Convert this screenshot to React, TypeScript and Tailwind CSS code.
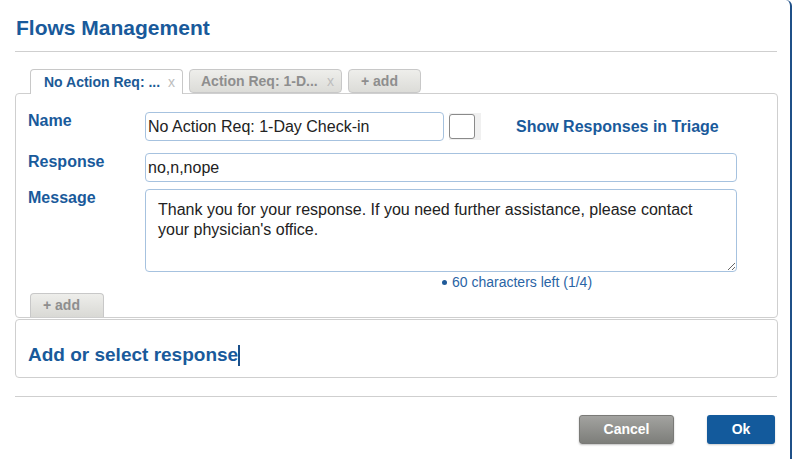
import { useState } from 'react';

export default function App() {
  const [name, setName] = useState('No Action Req: 1-Day Check-in');
  const [response, setResponse] = useState('no,n,nope');
  const [message, setMessage] = useState(
    "Thank you for your response. If you need further assistance, please contact your physician's office."
  );

  return (
    <div className="w-[796px] h-[459px] bg-white flex font-['Liberation_Sans',Arial,sans-serif]">
      <div className="w-[792px] h-full border-r-2 border-[#1f5088] rounded-tr-[6px] pl-[15px] pr-[12px]">
        <h1 className="pl-[1px] pt-[16px] text-[21px] leading-[24px] font-bold text-[#195a9b]">Flows Management</h1>
        <div className="mt-[11px] mr-px border-t border-[#cfcfcf]" />

        {/* tabs */}
        <div className="mt-[17px] -mb-px flex gap-[6px] pl-[15px] relative z-10">
          <div className="w-[153px] h-[25px] flex items-center justify-between pl-[13px] pr-[7px] bg-white border border-b-0 border-[#c8c8c8] rounded-t-[4px] text-[14px] font-bold text-[#1c5a96]">
            <span>No Action Req: ...</span>
            <span className="font-normal text-[#bdbdbd]">x</span>
          </div>
          <div className="w-[153px] h-[24px] flex items-center justify-between pl-[11px] pr-[7px] bg-gradient-to-b from-[#eeeeeb] to-[#dcdcd8] border border-[#c8c8c8] rounded-[4px] text-[14px] font-bold text-[#8e8e8e]">
            <span>Action Req: 1-D...</span>
            <span className="font-normal text-[#bdbdbd]">x</span>
          </div>
          <div className="w-[73px] h-[24px] flex items-center pl-[12px] bg-gradient-to-b from-[#eeeeeb] to-[#dcdcd8] border border-[#c8c8c8] rounded-[4px] text-[14px] font-bold text-[#8e8e8e]">
            + add
          </div>
        </div>

        {/* response panel */}
        <div className="border border-[#cfcfcf] rounded-[4px] bg-white pt-[18px] pl-[12px] pr-[40px]">
          <div className="grid grid-cols-[117px_1fr]">
            <label className="text-[16px] leading-[18px] font-bold text-[#195a9b]">Name</label>
            <div className="flex items-center">
              <input
                value={name}
                onChange={(e) => setName(e.target.value)}
                className="w-[299px] h-[29px] px-[2px] border border-[#a6c2df] rounded-[4px] text-[16px] text-[#222] outline-none"
              />
              <div className="ml-[5px] w-[32px] h-[27px] bg-[#f0f0f0] flex items-center">
                <div className="w-[26px] h-[25px] border border-[#8a8a8a] rounded-[3px] bg-white" />
              </div>
              <span className="ml-[35px] text-[16px] font-bold text-[#195a9b]">Show Responses in Triage</span>
            </div>

            <label className="mt-[12px] text-[16px] leading-[18px] font-bold text-[#195a9b]">Response</label>
            <input
              value={response}
              onChange={(e) => setResponse(e.target.value)}
              className="mt-[12px] w-full h-[29px] px-[2px] border border-[#a6c2df] rounded-[4px] text-[16px] text-[#222] outline-none"
            />

            <label className="mt-[7px] text-[16px] leading-[18px] font-bold text-[#195a9b]">Message</label>
            <textarea
              value={message}
              onChange={(e) => setMessage(e.target.value)}
              className="mt-[7px] w-full h-[83px] pt-[10px] px-[12px] border border-[#a6c2df] rounded-[4px] text-[16px] leading-[20px] text-[#222] outline-none"
            />

            <div />
            <div className="mt-[2px] pl-[297px] flex items-center gap-[5px] text-[14px] leading-[16px] text-[#2a64a5]">
              <span className="w-[5px] h-[5px] rounded-full bg-[#1f5a99]" />
              <span>60 characters left (1/4)</span>
            </div>
          </div>

          <button className="mt-[3px] ml-[2px] w-[74px] h-[24px] flex items-center pl-[12px] bg-gradient-to-b from-[#eeeeeb] to-[#d9d9d5] border border-b-0 border-[#c8c8c8] rounded-t-[4px] text-[14px] font-bold text-[#8e8e8e]">
            + add
          </button>
        </div>

        {/* add or select */}
        <div className="mt-[1px] h-[59px] border border-[#cfcfcf] rounded-[4px] pt-[24px] pl-[12px]">
          <div className="flex items-center h-[22px]">
            <span className="text-[19px] leading-[22px] font-bold text-[#195a9b]">Add or select response</span>
            <span className="inline-block w-[2px] h-[21px] bg-[#1a4f8a]" />
          </div>
        </div>

        <div className="mt-[18px] mr-px border-t border-[#cfcfcf]" />

        <div className="mt-[18px] mr-[3px] flex justify-end gap-[33px]">
          <button className="w-[95px] h-[29px] rounded-[3px] border border-[#7a7a77] bg-gradient-to-b from-[#a3a3a0] to-[#7d7e7a] shadow-[0_1px_2px_rgba(0,0,0,0.25)] text-[14px] font-bold text-white">
            Cancel
          </button>
          <button className="w-[68px] h-[29px] rounded-[3px] bg-[#135a9c] shadow-[0_1px_2px_rgba(0,0,0,0.2)] text-[14px] font-bold text-white">
            Ok
          </button>
        </div>
      </div>
    </div>
  );
}
